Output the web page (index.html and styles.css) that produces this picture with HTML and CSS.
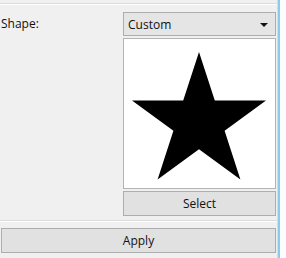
FILE: index.html
```html
<!DOCTYPE html>
<html>
<head>
<meta charset="utf-8">
<link rel="stylesheet" href="styles.css">
</head>
<body>
<div class="window">
  <div class="panel">
    <div class="rule top-rule"></div>
    <div class="row">
      <div class="label">Shape:</div>
      <div class="right">
        <div class="combo"><span>Custom</span><span class="arrow"></span></div>
        <div class="preview">
          <svg class="star" viewBox="1 1 150 150" width="150" height="150">
            <polygon points="76,14 91.8,62.6 143,62.6 101.6,92.7 117.4,141.4 76,111.3 34.6,141.4 50.4,92.7 9,62.6 60.2,62.6" fill="#000"/>
          </svg>
        </div>
        <div class="btn select">Select</div>
      </div>
    </div>
    <div class="rule mid-rule"></div>
    <div class="btn apply">Apply</div>
  </div>
  <div class="edge"></div>
  <div class="outside"></div>
</div>
</body>
</html>
```
FILE: styles.css
```css
html, body {
  margin: 0;
  padding: 0;
  background: #ffffff;
}
body {
  width: 286px;
  height: 258px;
  overflow: hidden;
  font-family: "Open Sans", "Noto Sans", sans-serif;
  font-size: 12px;
  color: #000;
}
.window {
  display: flex;
  height: 258px;
}
.panel {
  width: 278px;
  background: #f0f0f0;
  border-right: 1px solid #dcdcdc;
  box-sizing: border-box;
  padding-top: 3px;
  display: flex;
  flex-direction: column;
}
.edge {
  width: 2px;
  background: #8ccbed;
}
.outside {
  flex: 1;
  background: #fcfcfc;
}
.rule {
  height: 0;
  border-top: 1px solid #dcdcdc;
  border-bottom: 1px solid #ffffff;
}
.row {
  display: flex;
  margin-top: 7px;
}
.label {
  width: 123px;
  padding-left: 1px;
  box-sizing: border-box;
  line-height: 24px;
  color: #111;
}
.right {
  width: 153px;
  display: flex;
  flex-direction: column;
}
.combo {
  height: 24px;
  box-sizing: border-box;
  border: 1px solid #adadad;
  background: #e5e5e5;
  display: flex;
  align-items: center;
  justify-content: space-between;
  padding: 0 7px 0 4px;
  color: #111;
}
.arrow {
  width: 0;
  height: 0;
  border-left: 4px solid transparent;
  border-right: 4px solid transparent;
  border-top: 4px solid #111;
  margin-top: 1px;
}
.preview {
  margin-top: 2px;
  height: 151px;
  box-sizing: border-box;
  border: 1px solid #b4b4b4;
  background: #ffffff;
  display: flex;
  align-items: flex-start;
}
.star {
  display: block;
}
.btn {
  height: 25px;
  box-sizing: border-box;
  border: 1px solid #adadad;
  background: #e1e1e1;
  display: flex;
  align-items: center;
  justify-content: center;
  color: #111;
}
.select {
  margin-top: 2px;
}
.mid-rule {
  margin-top: 4px;
}
.apply {
  margin: 6px 0 0 1px;
  width: 275px;
}
```
